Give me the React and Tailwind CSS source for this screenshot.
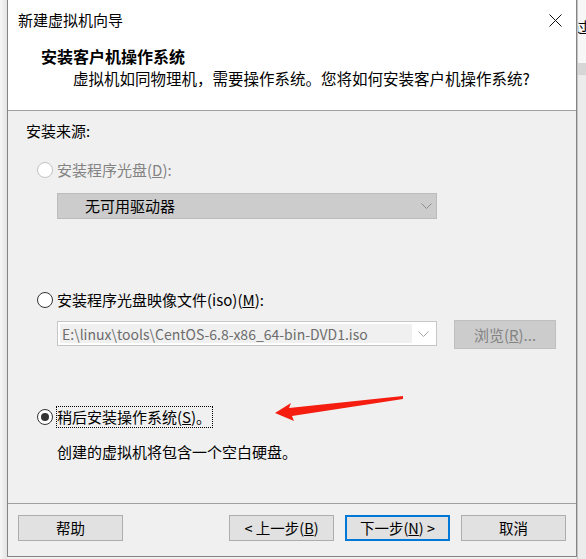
const font = "font-['Noto_Sans_CJK_SC','Noto_Sans',sans-serif]";

function Radio({ checked, disabled }) {
  return (
    <span
      className={`flex h-[16px] w-[16px] shrink-0 items-center justify-center rounded-full border bg-white ${
        disabled ? 'border-[#c2c2c2]' : 'border-[#333333]'
      }`}
    >
      {checked && <span className="h-[8px] w-[8px] rounded-full bg-[#333333]" />}
    </span>
  );
}

function Chevron({ color }) {
  return (
    <svg width="11" height="6" viewBox="0 0 11 6" fill="none">
      <polyline points="0.5,0.5 5.5,5.5 10.5,0.5" stroke={color} strokeWidth="1" />
    </svg>
  );
}

function Btn({ children, focused }) {
  return (
    <button
      className={`flex h-[26px] w-[105px] items-center justify-center bg-[#e1e1e1] text-[14.5px] text-black ${
        focused ? 'border-2 border-[#0078d7]' : 'border border-[#adadad]'
      }`}
    >
      {children}
    </button>
  );
}

export default function App() {
  return (
    <div className={`relative flex h-[559px] w-[586px] overflow-hidden bg-[#f0f0f0] ${font}`}>
      {/* left desktop edge */}
      <div className="w-[7px] shrink-0 bg-gradient-to-r from-[#f7f7f7] to-[#e4e4e4]" />

      {/* dialog */}
      <div className="flex h-[557px] w-[570px] shrink-0 flex-col border-x border-b border-[#858585]">
        {/* header */}
        <div className="h-[110px] shrink-0 bg-white">
          <div className="flex h-[40px] items-center justify-between pl-[10px] pr-[14px]">
            <span className="text-[15px] leading-[20px] text-black">新建虚拟机向导</span>
            <svg width="13" height="13" viewBox="0 0 13 13">
              <path d="M0.5 0.5 L12.5 12.5 M12.5 0.5 L0.5 12.5" stroke="#111" strokeWidth="1" />
            </svg>
          </div>
          <div className="mt-[6px] pl-[33px] text-[16px] font-bold leading-[20px] text-black">
            安装客户机操作系统
          </div>
          <div className="mt-[2px] pl-[65px] text-[15.5px] leading-[20px] text-black">
            虚拟机如同物理机，需要操作系统。您将如何安装客户机操作系统?
          </div>
        </div>
        <div className="h-px shrink-0 bg-[#a0a0a0]" />

        {/* body */}
        <div className="flex h-[392px] shrink-0 flex-col text-[15px] leading-[20px] text-black">
          <div className="pl-[18px] pt-[10px]">安装来源:</div>

          <div className="mt-[19px] flex items-center gap-[4px] pl-[29px] text-[#838383]">
            <Radio disabled />
            <span>
              安装程序光盘(<span className="underline">D</span>):
            </span>
          </div>

          <div className="ml-[49px] mt-[13px] flex h-[26px] w-[380px] items-center justify-between border border-[#bcbcbc] bg-[#cccccc] pl-[27px] pr-[4px]">
            <span>无可用驱动器</span>
            <Chevron color="#8e8e8e" />
          </div>

          <div className="mt-[71px] flex items-center gap-[4px] pl-[29px]">
            <Radio />
            <span>
              安装程序光盘映像文件(iso)(<span className="underline">M</span>):
            </span>
          </div>

          <div className="mt-[10px] flex h-[29px] items-start pl-[49px]">
            <div className="mt-px flex h-[25px] w-[380px] items-center border border-[#c6c6c6] bg-white p-[2px]">
              <div className="flex h-full w-[352px] items-center bg-[#f0f0f0] pl-[2px] text-[14px] text-[#6d6d6d]">
                E:\linux\tools\CentOS-6.8-x86_64-bin-DVD1.iso
              </div>
              <div className="flex flex-1 justify-center">
                <Chevron color="#a6a6a6" />
              </div>
            </div>
            <div className="ml-[17px] flex h-[29px] w-[102px] items-center justify-center border border-[#bfbfbf] bg-[#cccccc] text-[#838383]">
              浏览(<span className="underline">R</span>)...
            </div>
          </div>

          <div className="mt-[57px] flex items-center gap-[3px] pl-[29px]">
            <Radio checked />
            <span className="border border-dotted border-black pr-[1px]">
              稍后安装操作系统(<span className="underline">S</span>)。
            </span>
          </div>

          <div className="mt-[14px] pl-[49px]">创建的虚拟机将包含一个空白硬盘。</div>
        </div>
        <div className="h-px shrink-0 bg-[#a0a0a0]" />

        {/* footer */}
        <div className="flex flex-1 items-start justify-between px-[10px] pt-[11px]">
          <Btn>帮助</Btn>
          <div className="flex gap-[11px]">
            <Btn>
              &lt; 上一步(<span className="underline">B</span>)
            </Btn>
            <Btn focused>
              下一步(<span className="underline">N</span>) &gt;
            </Btn>
            <Btn>取消</Btn>
          </div>
        </div>
      </div>

      {/* right desktop edge */}
      <div className="flex w-[9px] shrink-0 flex-col border-l border-[#c4c4c4]">
        <div className="flex h-[63px] items-start overflow-hidden bg-[#f7f7f7] pt-[17px]">
          <span className="-ml-[4px] text-[15px] leading-[20px] text-black">过</span>
        </div>
        <div className="h-[12px] bg-[#d6d6d6]" />
        <div className="flex-1 bg-[#ececec]" />
      </div>

      {/* annotation arrow */}
      <svg className="pointer-events-none absolute left-0 top-0" width="586" height="559">
        <polygon
          points="275,413 291,403 289,408 403,396 403,399 292,416 294,421"
          fill="#f51d10"
        />
      </svg>
    </div>
  );
}
